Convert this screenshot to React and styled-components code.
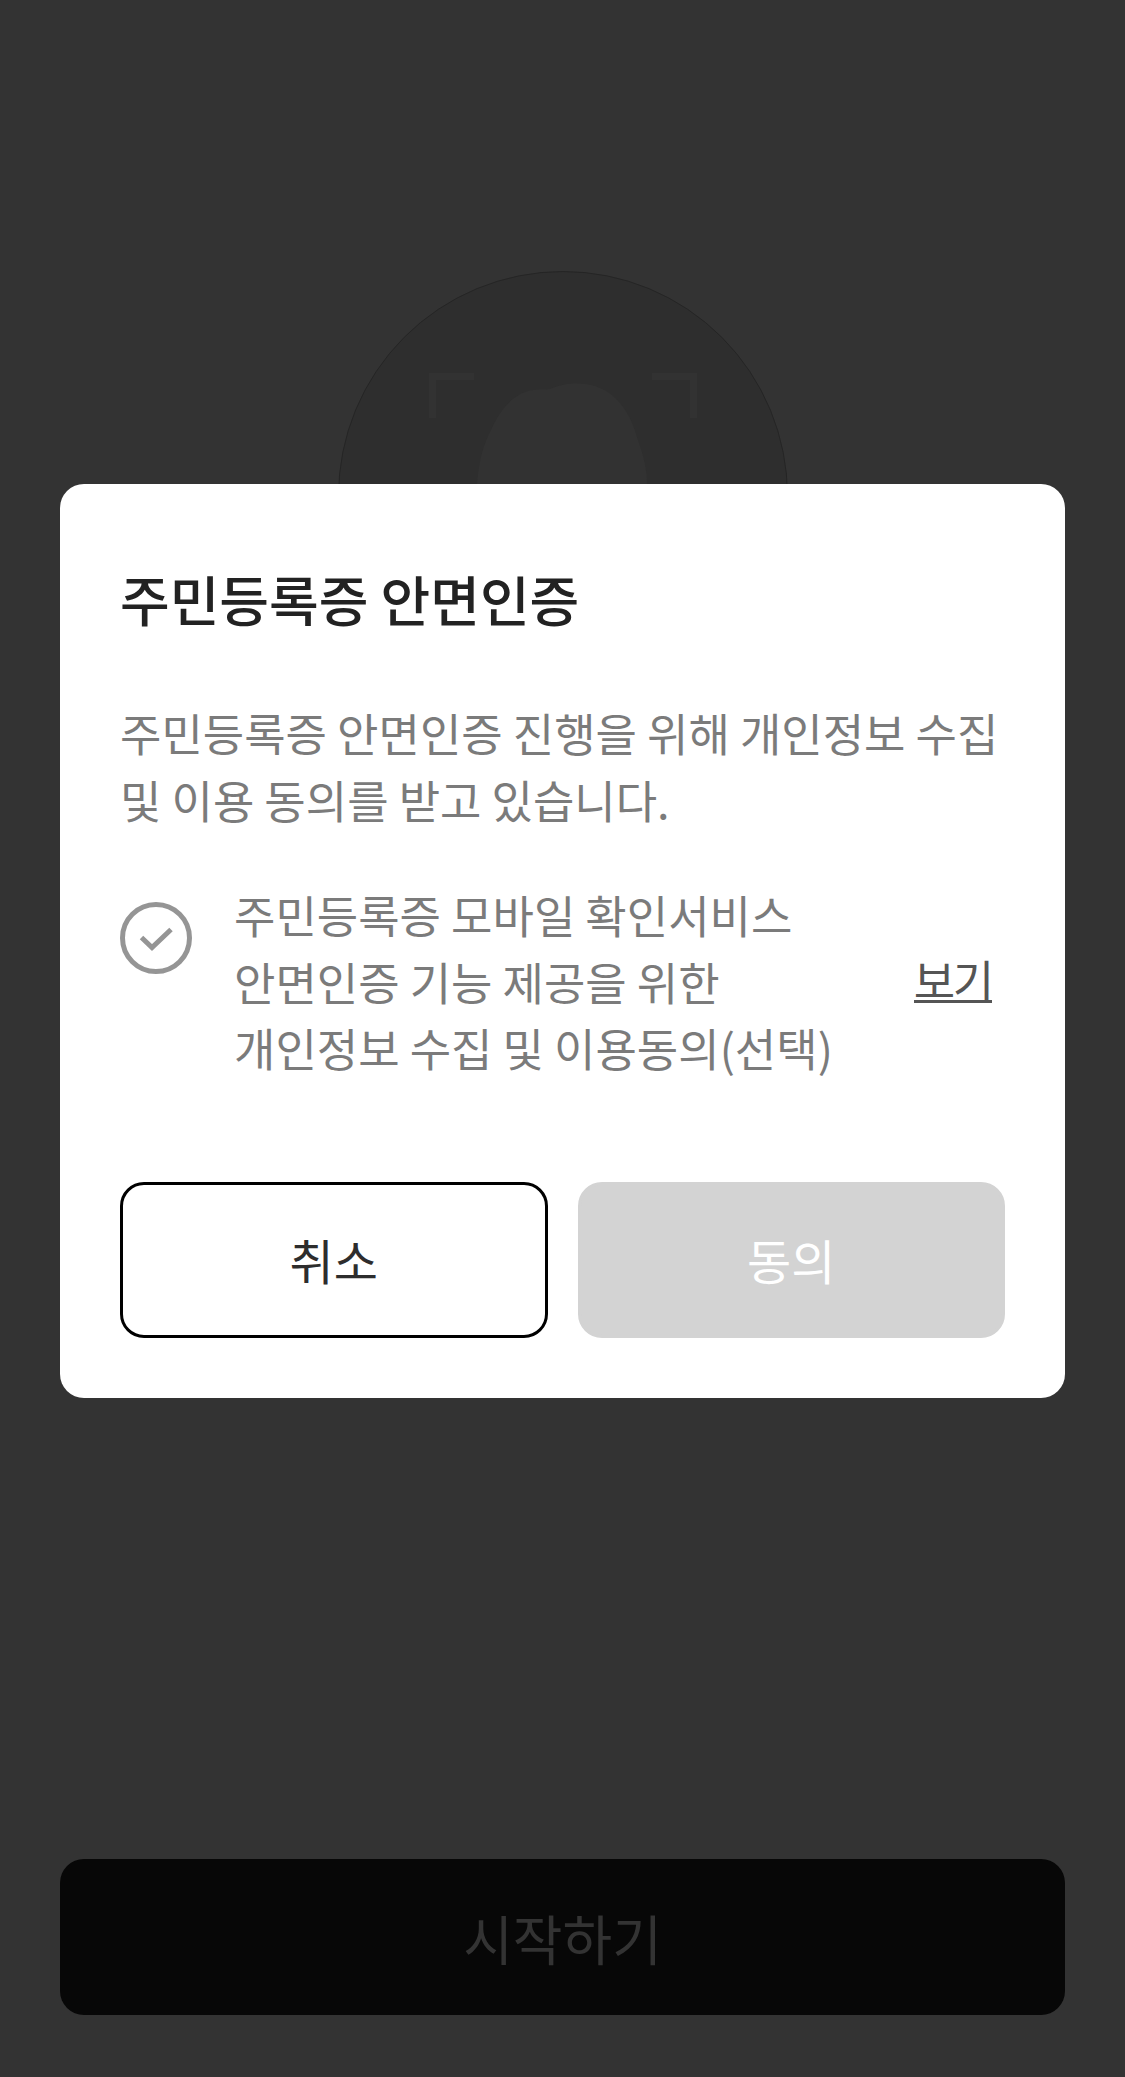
import React from 'react'
import styled, { createGlobalStyle } from 'styled-components';

const GlobalStyle = createGlobalStyle`
  * { box-sizing: border-box; }
  body {
    margin: 0;
    background: #333333;
    font-family: 'Noto Sans CJK KR', 'Noto Sans', sans-serif;
  }
  h1, p { margin: 0; }
  button { font-family: inherit; cursor: pointer; }
`;

const Page = styled.main`
  height: 2077px;
  padding: 271px 60px 62px;
  display: flex;
  flex-direction: column;
  align-items: center;
  justify-content: space-between;
  background: #333333;
`;

const FaceArt = styled.svg`
  width: 450px;
  height: 450px;
`;

const StartButton = styled.button`
  width: 100%;
  height: 156px;
  padding: 2px 0 0;
  border: 0;
  border-radius: 24px;
  background: #070707;
  color: #333333;
  font-size: 54px;
  line-height: 80px;
`;

const Overlay = styled.div`
  position: fixed;
  inset: 0;
  padding: 484px 60px 0;
`;

const Dialog = styled.section`
  height: 914px;
  padding: 75px 60px 60px;
  display: flex;
  flex-direction: column;
  border-radius: 24px;
  background: #ffffff;
`;

const Title = styled.h1`
  color: #222222;
  font-size: 54px;
  font-weight: 500;
  line-height: 80px;
`;

const Description = styled.p`
  margin-top: 61px;
  color: #7b7b7b;
  font-size: 45px;
  line-height: 66.5px;
  white-space: nowrap;
`;

const Agreement = styled.div`
  margin-top: 49px;
  display: flex;
`;

const CheckIcon = styled.svg`
  width: 72px;
  height: 72px;
  margin: 20px 42px 0 0;
  flex: none;
`;

const AgreementText = styled.p`
  flex: 1;
  color: #7b7b7b;
  font-size: 45px;
  line-height: 66.5px;
`;

const ViewLink = styled.button`
  align-self: flex-start;
  margin: 77px 13px 0 0;
  padding: 0;
  border: 0;
  border-bottom: 3px solid #555555;
  background: none;
  color: #555555;
  font-size: 45px;
  line-height: 41px;
  letter-spacing: -0.05em;
`;

const Buttons = styled.div`
  margin-top: auto;
  display: grid;
  grid-template-columns: 1fr 1fr;
  gap: 30px;
`;

const Button = styled.button`
  height: 156px;
  padding: 0 0 2px;
  border: 3px solid ${({ $disabled }) => ($disabled ? '#d3d3d3' : '#000000')};
  border-radius: 24px;
  background: ${({ $disabled }) => ($disabled ? '#d3d3d3' : '#ffffff')};
  color: ${({ $disabled }) => ($disabled ? '#ffffff' : '#2d2d2d')};
  font-size: 48px;
  line-height: 70px;
`;

export default function App() {
  return (
    <>
      <GlobalStyle />
      <Page>
        <FaceArt viewBox='0 0 450 450'>
          <circle cx='225' cy='225' r='224.5' fill='#2e2e2e' stroke='#252525' />
          <g fill='none' stroke='#323232' strokeWidth='7'>
            <path d='M94.5 147V105.5H136' />
            <path d='M314 105.5H355.5V147' />
            <path d='M94.5 303V344.5H136' />
            <path d='M314 344.5H355.5V303' />
          </g>
          <path d='M139 229V213C141 188 146 172 153 159C162 138 178 118.500 201 118.500H207C217 118.500 218 112.500 239 112.500C257 112.500 271 119 282 132C292 144 296 156 300 169C306 186 309 200 309 213V229C309 290 270 326 223 326S139 290 139 229Z' fill='#323232' />
        </FaceArt>
        <StartButton>시작하기</StartButton>
      </Page>
      <Overlay>
        <Dialog role='dialog'>
          <Title>주민등록증 안면인증</Title>
          <Description>
            주민등록증 안면인증 진행을 위해 개인정보 수집<br />
            및 이용 동의를 받고 있습니다.
          </Description>
          <Agreement>
            <CheckIcon viewBox='0 0 72 72' fill='none' stroke='#959595' strokeWidth='5'>
              <circle cx='36' cy='36' r='33.5' />
              <path d='M21.5 35.5L32 45.5L51 27.5' />
            </CheckIcon>
            <AgreementText>
              주민등록증 모바일 확인서비스<br />
              안면인증 기능 제공을 위한<br />
              개인정보 수집 및 이용동의(선택)
            </AgreementText>
            <ViewLink>보기</ViewLink>
          </Agreement>
          <Buttons>
            <Button>취소</Button>
            <Button $disabled>동의</Button>
          </Buttons>
        </Dialog>
      </Overlay>
    </>
  )
}
